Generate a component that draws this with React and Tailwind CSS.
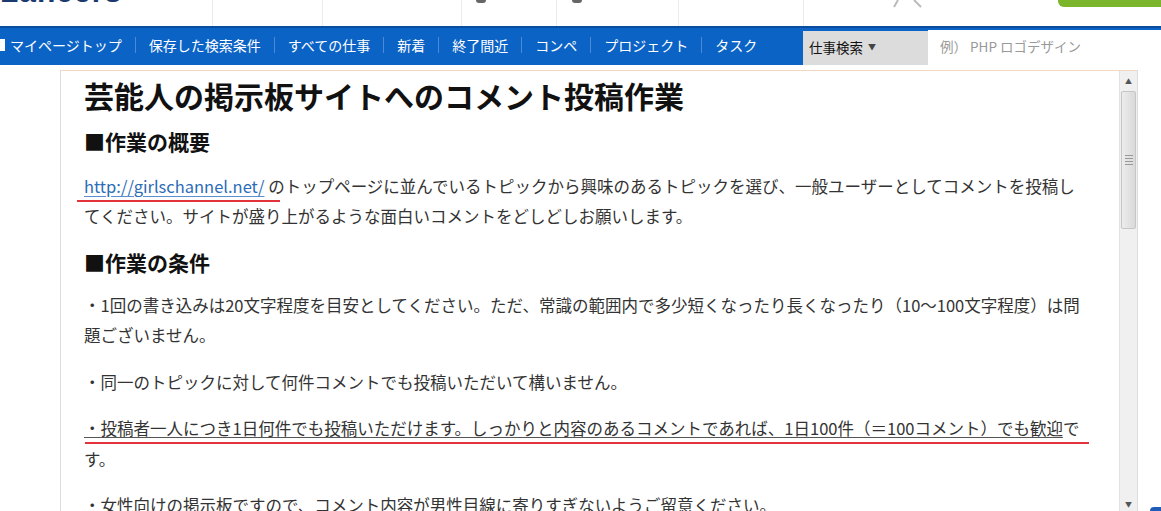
import React from "react";

const navItems = ["保存した検索条件", "すべての仕事", "新着", "終了間近", "コンペ", "プロジェクト", "タスク"];

function TopStrip() {
  return (
    <div className="flex h-[26px] bg-white overflow-hidden">
      <div className="w-[212px] overflow-hidden">
        <div className="-mt-[23px] text-[30px] leading-[30px] font-bold text-[#1d3a6e] tracking-[1px] font-['Liberation_Sans',sans-serif]">
          Lancers
        </div>
      </div>
      <div className="w-[110px] border-l border-[#ececec]" />
      <div className="w-[139px] border-l border-[#ececec]" />
      <div className="w-[95px] border-l border-[#ececec] flex justify-start pl-[14px]">
        <div className="w-[10px] h-[3px] rounded-b-full bg-[#666]" />
      </div>
      <div className="w-[122px] border-l border-[#ececec] flex justify-start pl-[15px]">
        <div className="w-[10px] h-[3px] rounded-b-full bg-[#666]" />
      </div>
      <div className="w-[125px] border-l border-[#ececec]" />
      <div className="w-[255px] border-l border-[#ececec] relative">
        <svg className="absolute left-[88px] top-0" width="34" height="8" viewBox="0 0 34 8">
          <path d="M6 0 L2 7" stroke="#bbb" strokeWidth="2" fill="none" />
          <path d="M22 0 L29 7" stroke="#bbb" strokeWidth="2" fill="none" />
        </svg>
      </div>
      <div className="flex-1">
        <div className="h-[7px] bg-[#7ab52b] rounded-bl-[6px]" />
      </div>
    </div>
  );
}

function NavBar() {
  return (
    <div className="flex h-[39px] bg-[#0b63c6] border-t-2 border-[#0a4c9e] text-[14px] text-white">
      <div className="flex items-center pb-[3px]">
        <div className="w-[5px] h-[12px] bg-white" />
        <span className="pl-[5px] pr-[13px]">マイページトップ</span>
      </div>
      {navItems.map((item) => (
        <div key={item} className="flex items-center pb-[3px]">
          <div className="w-px h-[16px] bg-[#4a8ad6]" />
          <span className="px-[13px]">{item}</span>
        </div>
      ))}
      <div className="flex-1" />
      <div className="flex items-end">
        <div className="w-[125px] h-[34px] bg-[#dcdcdc] text-[#111] text-[13.5px] flex items-center pl-[6px] pb-[2px]">
          仕事検索 <span className="text-[8px] ml-[5px] text-[#444]">▼</span>
        </div>
        <div className="w-[233px] h-[35px] bg-white text-[#999] text-[13.5px] flex items-center pl-[12px] pb-[2px]">
          例） PHP ロゴデザイン
        </div>
      </div>
    </div>
  );
}

function Scrollbar() {
  return (
    <div className="w-[18px] flex flex-col bg-[#f0f0f0] border-l border-[#e2e2e2]">
      <div className="h-[20px] flex items-center justify-center text-[7px] text-[#555]">▲</div>
      <div className="h-[138px] mx-[1px] rounded-[2px] border border-[#c6c6c6] bg-gradient-to-r from-[#ececec] to-[#dadada] flex flex-col items-center justify-center gap-[2px]">
        <div className="w-[8px] h-px bg-[#999]" />
        <div className="w-[8px] h-px bg-[#999]" />
        <div className="w-[8px] h-px bg-[#999]" />
        <div className="w-[8px] h-px bg-[#999]" />
      </div>
      <div className="flex-1" />
      <div className="h-[14px] flex items-center justify-center text-[7px] text-[#555]">▼</div>
    </div>
  );
}

function Content() {
  return (
    <div className="flex-1 pl-[23px] pt-[6px] text-[16.5px] leading-[30px] text-[#333] whitespace-nowrap overflow-hidden">
      <h1 className="text-[30px] leading-[36px] font-bold text-[#111]">芸能人の掲示板サイトへのコメント投稿作業</h1>
      <h2 className="mt-[13px] text-[21px] leading-[30px] font-bold text-[#111]">■作業の概要</h2>
      <p className="relative mt-[15px]">
        <a className="text-[#2d6cb6] underline underline-offset-[3px] decoration-[#5b8fd0]">http://girlschannel.net/</a>{" "}
        のトップページに並んでいるトピックから興味のあるトピックを選び、一般ユーザーとしてコメントを投稿し
        <br />
        てください。サイトが盛り上がるような面白いコメントをどしどしお願いします。
        <span className="absolute left-[-7px] top-[29px] w-[203px] h-[2px] bg-[#e2323c]" />
      </p>
      <h2 className="mt-[16px] text-[21px] leading-[30px] font-bold text-[#111]">■作業の条件</h2>
      <p className="mt-[13px]">
        ・1回の書き込みは20文字程度を目安としてください。ただ、常識の範囲内で多少短くなったり長くなったり（10〜100文字程度）は問
        <br />
        題ございません。
      </p>
      <p className="mt-[17px]">・同一のトピックに対して何件コメントでも投稿いただいて構いません。</p>
      <p className="relative mt-[16px] leading-[31px]">
        <u className="decoration-[#555] underline-offset-[2px]">
          ・投稿者一人につき1日何件でも投稿いただけます。しっかりと内容のあるコメントであれば、1日100件（＝100コメント）でも歓迎
        </u>
        で
        <br />
        す。
        <span className="absolute left-[1px] top-[29px] w-[1004px] h-[2px] bg-[#e2323c]" />
      </p>
      <p className="mt-[15px]">・女性向けの掲示板ですので、コメント内容が男性目線に寄りすぎないようご留意ください。</p>
    </div>
  );
}

export default function App() {
  return (
    <div className="relative h-[511px] w-[1161px] overflow-hidden bg-white font-['Noto_Sans_CJK_JP','Noto_Sans',sans-serif]">
      <TopStrip />
      <NavBar />
      <div className="flex pt-[5px]">
        <div className="w-[60px]" />
        <div className="w-[1078px] h-[441px] flex border-l border-t border-r border-[#dedede] border-t-[#f2d8c2]">
          <Content />
          <Scrollbar />
        </div>
      </div>
      <div className="absolute right-0 bottom-0 w-[11px] h-[4px] rounded-tl-[4px] bg-[#1f5cb8]" />
    </div>
  );
}
